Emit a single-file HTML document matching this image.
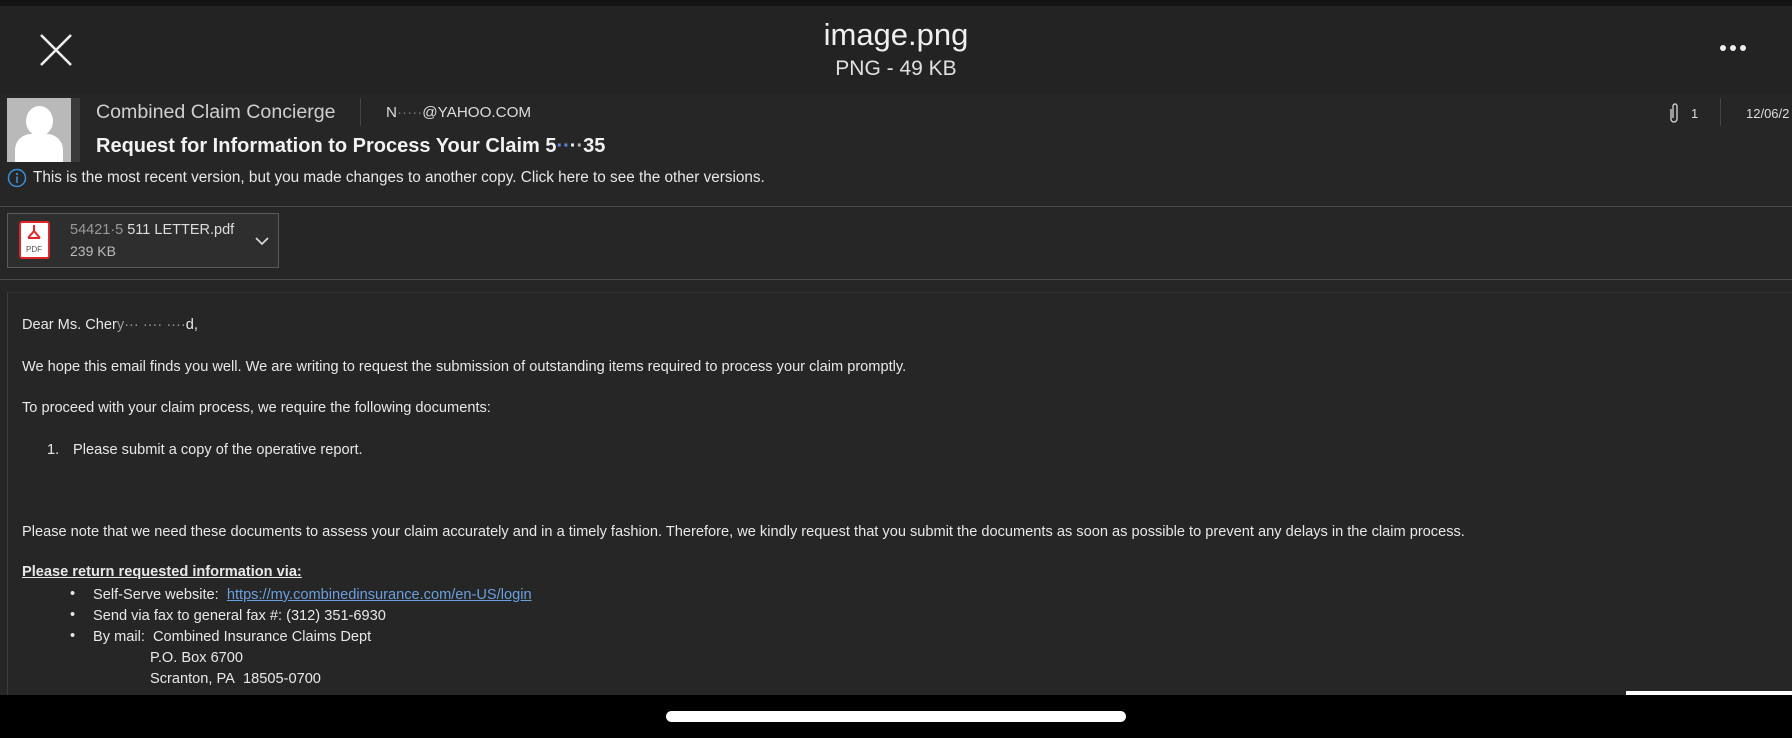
<!DOCTYPE html>
<html><head><meta charset="utf-8"><style>
*{margin:0;padding:0;box-sizing:border-box}
body{width:1792px;height:738px;overflow:hidden;background:#000;font-family:"Liberation Sans",sans-serif;position:relative;color:#e6e6e6}
.a{position:absolute;white-space:nowrap}
.b{font-size:14.6px;color:#e8e8e8}
</style></head><body>
<div class="a" style="left:0;top:0;width:1792px;height:6px;background:#141414"></div>
<div class="a" style="left:0;top:6px;width:1792px;height:88px;background:#232323"></div>
<svg class="a" style="left:38px;top:32px" width="36" height="36"><path d="M3 3L33 33M33 3L3 33" stroke="#eee" stroke-width="2.6"/></svg>
<div class="a" style="left:0;width:1792px;top:17px;text-align:center;font-size:31px;color:#f0f0f0">image.png</div>
<div class="a" style="left:0;width:1792px;top:57px;text-align:center;font-size:21px;color:#e0e0e0">PNG - 49 KB</div>
<div class="a" style="left:1720px;top:45px;font-size:0">
<span style="display:inline-block;width:6px;height:6px;border-radius:3px;background:#eee;margin-right:4px"></span><span style="display:inline-block;width:6px;height:6px;border-radius:3px;background:#eee;margin-right:4px"></span><span style="display:inline-block;width:6px;height:6px;border-radius:3px;background:#eee"></span></div>
<div class="a" style="left:0;top:94px;width:1792px;height:601px;background:#262626"></div>
<div class="a" style="left:7px;top:98px;width:73px;height:64px;background:#3a3a3a"></div>
<div class="a" style="left:7px;top:98px;width:64px;height:64px;background:#b9b9b9;overflow:hidden">
<div class="a" style="left:19px;top:8px;width:27px;height:30px;border-radius:50%;background:#fff"></div>
<div class="a" style="left:8px;top:36px;width:48px;height:40px;border-radius:16px 16px 0 0;background:#fff"></div></div>
<div class="a" style="left:96px;top:101px;font-size:19.6px;color:#cfcfcf">Combined Claim Concierge</div>
<div class="a" style="left:360px;top:98px;width:1px;height:28px;background:#444"></div>
<div class="a" style="left:386px;top:104px;font-size:15.2px;color:#ddd">N<span style="color:#777">·····</span>@YAHOO.COM</div>
<div class="a" style="left:96px;top:135px;font-size:20px;font-weight:bold;color:#f2f2f2">Request for Information to Process Your Claim 5<span style="color:#5a8cd8">··</span>·<span style="color:#bbb">·</span>35</div>
<svg class="a" style="left:7px;top:168px" width="20" height="20"><circle cx="10" cy="10" r="8.5" fill="none" stroke="#3a8fd8" stroke-width="1.5"/><rect x="9.2" y="8.5" width="1.6" height="6.5" fill="#3a8fd8"/><circle cx="10" cy="6" r="1.1" fill="#3a8fd8"/></svg>
<div class="a" style="left:33px;top:169px;font-size:15.3px;color:#e8e8e8">This is the most recent version, but you made changes to another copy. Click here to see the other versions.</div>
<svg class="a" style="left:1667px;top:101px" width="14" height="24"><path d="M4 8V18a3 3 0 0 0 6 0V5a2 2 0 0 0-4 0V17" fill="none" stroke="#ccc" stroke-width="1.4"/></svg>
<div class="a" style="left:1691px;top:106px;font-size:13px;color:#ddd">1</div>
<div class="a" style="left:1720px;top:98px;width:1px;height:28px;background:#444"></div>
<div class="a" style="left:1746px;top:106px;font-size:13px;color:#ddd">12/06/2</div>
<div class="a" style="left:0;top:206px;width:1792px;height:1px;background:#4a4a4a"></div>
<div class="a" style="left:7px;top:213px;width:272px;height:55px;background:#2e2e2e;border:1px solid #5a5a5a"></div>
<div class="a" style="left:19px;top:221px;width:31px;height:38px;background:#fff;border:2px solid #e0262a;border-radius:3px"></div>
<svg class="a" style="left:22px;top:223px" width="24" height="20"><path d="M12 2v6M6 15l6-7 6 7M6 15h12" fill="none" stroke="#e0262a" stroke-width="2"/></svg>
<div class="a" style="left:26px;top:245px;font-size:8px;color:#555">PDF</div>
<div class="a" style="left:70px;top:222px;font-size:14.5px;color:#ddd"><span style="color:#999">54421·5</span> 511 LETTER.pdf</div>
<div class="a" style="left:70px;top:243px;font-size:14px;color:#bbb">239 KB</div>
<svg class="a" style="left:255px;top:236px" width="14" height="10"><path d="M1 2l6 6 6-6" fill="none" stroke="#ddd" stroke-width="1.6"/></svg>
<div class="a" style="left:0;top:279px;width:1792px;height:1px;background:#4a4a4a"></div>
<div class="a" style="left:7px;top:292px;width:1792px;height:1px;background:#333"></div>
<div class="a" style="left:7px;top:292px;width:1px;height:403px;background:#3c3c3c"></div>
<div class="a b" style="left:22px;top:317px">Dear Ms. Cher<span style="color:#999">y··· ···· ····</span>d,</div>
<div class="a b" style="left:22px;top:359px">We hope this email finds you well. We are writing to request the submission of outstanding items required to process your claim promptly.</div>
<div class="a b" style="left:22px;top:400px">To proceed with your claim process, we require the following documents:</div>
<div class="a b" style="left:47px;top:442px">1.</div>
<div class="a b" style="left:73px;top:442px">Please submit a copy of the operative report.</div>
<div class="a b" style="left:22px;top:524px">Please note that we need these documents to assess your claim accurately and in a timely fashion. Therefore, we kindly request that you submit the documents as soon as possible to prevent any delays in the claim process.</div>
<div class="a b" style="left:22px;top:564px;font-weight:bold;text-decoration:underline">Please return requested information via:</div>
<div class="a b" style="left:70px;top:586px">•</div>
<div class="a b" style="left:93px;top:587px">Self-Serve website:&nbsp; <span style="color:#6a9fe0;text-decoration:underline">https://my.combinedinsurance.com/en-US/login</span></div>
<div class="a b" style="left:70px;top:607px">•</div>
<div class="a b" style="left:93px;top:608px">Send via fax to general fax #: (312) 351-6930</div>
<div class="a b" style="left:70px;top:628px">•</div>
<div class="a b" style="left:93px;top:629px">By mail:&nbsp; Combined Insurance Claims Dept</div>
<div class="a b" style="left:150px;top:650px">P.O. Box 6700</div>
<div class="a b" style="left:150px;top:671px">Scranton, PA&nbsp; 18505-0700</div>
<div class="a" style="left:1626px;top:691px;width:166px;height:4px;background:#fff"></div>
<div class="a" style="left:666px;top:711px;width:460px;height:11px;border-radius:6px;background:#fff"></div>
</body></html>
